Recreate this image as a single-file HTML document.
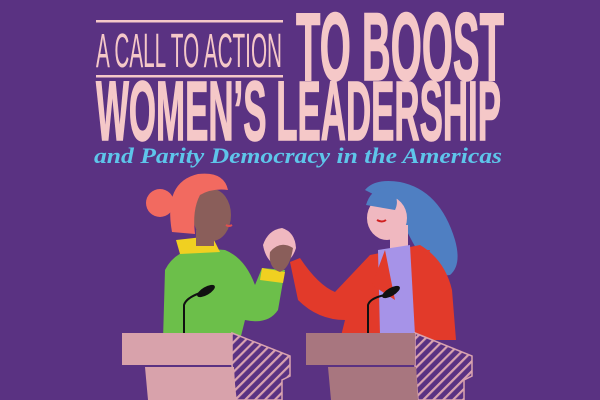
<!DOCTYPE html>
<html><head><meta charset="utf-8"><style>
html,body{margin:0;padding:0;background:#5a3282;}
svg{display:block}
</style></head><body>
<svg width="600" height="400" viewBox="0 0 600 400" xmlns="http://www.w3.org/2000/svg">
<defs>
<pattern id="hatch" width="7" height="7" patternUnits="userSpaceOnUse" patternTransform="rotate(-45)">
<rect width="7" height="7" fill="#5a3282"/><rect width="7" height="2.2" fill="#d9a3b0"/>
</pattern>
</defs>
<rect width="600" height="400" fill="#5a3282"/>
<!-- title -->
<rect x="96" y="20" width="187" height="2.5" fill="#f5c8c8"/>
<rect x="96" y="75" width="187" height="2.5" fill="#f5c8c8"/>
<text x="96" y="67" font-family="Liberation Sans Narrow, Liberation Sans, sans-serif" font-size="36" fill="#f5c8c8" textLength="186" lengthAdjust="spacingAndGlyphs" transform="translate(0,-23.5) scale(1,1.35)">A CALL TO ACTION</text>
<text x="296" y="80" font-family="Liberation Sans Narrow, Liberation Sans, sans-serif" font-weight="bold" font-size="62" fill="#f5c8c8" textLength="208" lengthAdjust="spacingAndGlyphs" transform="translate(0,-44) scale(1,1.55)" stroke="#f5c8c8" stroke-width="1">TO BOOST</text>
<text x="96" y="140" font-family="Liberation Sans Narrow, Liberation Sans, sans-serif" font-weight="bold" font-size="56" fill="#f5c8c8" textLength="405" lengthAdjust="spacingAndGlyphs" transform="translate(0,-70) scale(1,1.5)" stroke="#f5c8c8" stroke-width="1">WOMEN’S LEADERSHIP</text>
<text x="94" y="163" font-family="Liberation Serif, serif" font-weight="bold" font-style="italic" font-size="22" fill="#5ec5ea" textLength="408" lengthAdjust="spacingAndGlyphs">and Parity Democracy in the Americas</text>

<!-- left woman -->
<path d="M163 340 L165 270 Q175 250 200 248 L225 250 Q245 258 255 285 L262 268 L285 270 L278 310 Q268 325 245 320 L240 340 Z" fill="#6cbf4a"/>
<path d="M176 240 L212 236 L220 252 L180 254 Z" fill="#f0d021"/>
<path d="M262 268 L285 272 L283 283 L260 280 Z" fill="#f0d021"/>
<ellipse cx="212" cy="215" rx="19" ry="26" fill="#8a5e5a"/>
<rect x="196" y="230" width="18" height="16" fill="#8a5e5a"/>
<circle cx="160" cy="203" r="14" fill="#f26a60"/>
<path d="M172 232 Q163 182 198 174 Q224 171 228 190 Q212 188 200 195 Q192 210 195 234 Z" fill="#f26a60"/>
<path d="M226 225 Q229 227 232 225" stroke="#e05050" stroke-width="2" fill="none"/>
<!-- hands -->
<path d="M263 245 Q268 230 282 228 Q295 232 296 248 Q292 262 278 266 Q266 262 263 245 Z" fill="#f0b8c0"/>
<path d="M270 252 Q280 240 293 248 Q290 268 280 272 Q268 268 270 252 Z" fill="#8a5e5a"/>

<!-- right woman -->
<path d="M365 190 Q375 178 400 182 Q440 190 455 240 Q462 265 450 275 Q430 278 420 255 Q405 230 395 205 Z" fill="#4f7fc2"/>
<ellipse cx="387" cy="218" rx="20" ry="22" fill="#f0b8c0"/>
<path d="M366 205 Q372 185 392 188 Q400 200 395 210 Z" fill="#4f7fc2"/>
<rect x="390" y="225" width="18" height="25" fill="#f0b8c0"/>
<path d="M290 262 L300 258 Q318 285 335 292 L370 255 L420 245 Q445 260 452 290 L456 340 L340 340 L345 320 Q318 320 298 300 Z" fill="#e23a2a"/>
<path d="M378 250 L410 245 L415 335 L380 335 Z" fill="#a693e8"/>
<path d="M372 285 L385 250 L395 300 Z M420 300 L412 250 L430 250 Z" fill="#e23a2a"/>
<path d="M377 220 Q382 223 386 220" stroke="#d02020" stroke-width="2" fill="none"/>

<!-- mics -->
<path d="M184 335 L184 305 Q186 298 200 293" stroke="#111" stroke-width="2" fill="none"/>
<ellipse cx="206" cy="291" rx="10" ry="4" transform="rotate(-30 206 291)" fill="#111"/>
<path d="M368 335 L368 305 Q370 298 385 295" stroke="#111" stroke-width="2" fill="none"/>
<ellipse cx="391" cy="292" rx="10" ry="4" transform="rotate(-30 391 292)" fill="#111"/>

<!-- podiums -->
<polygon points="232,333 290,356 290,376 282,380 282,400 236,400 232,365" fill="url(#hatch)" stroke="#d9a3b0" stroke-width="1.5"/>
<rect x="122" y="333" width="110" height="32" fill="#d8a2ab"/>
<polygon points="145,367 234,367 236,400 148,400" fill="#d8a2ab"/>
<polygon points="415,333 472,356 472,376 464,380 464,400 418,400 415,365" fill="url(#hatch)" stroke="#d9a3b0" stroke-width="1.5"/>
<rect x="306" y="333" width="109" height="32" fill="#a8767f"/>
<polygon points="328,367 416,367 418,400 331,400" fill="#a8767f"/>
</svg>
</body></html>
